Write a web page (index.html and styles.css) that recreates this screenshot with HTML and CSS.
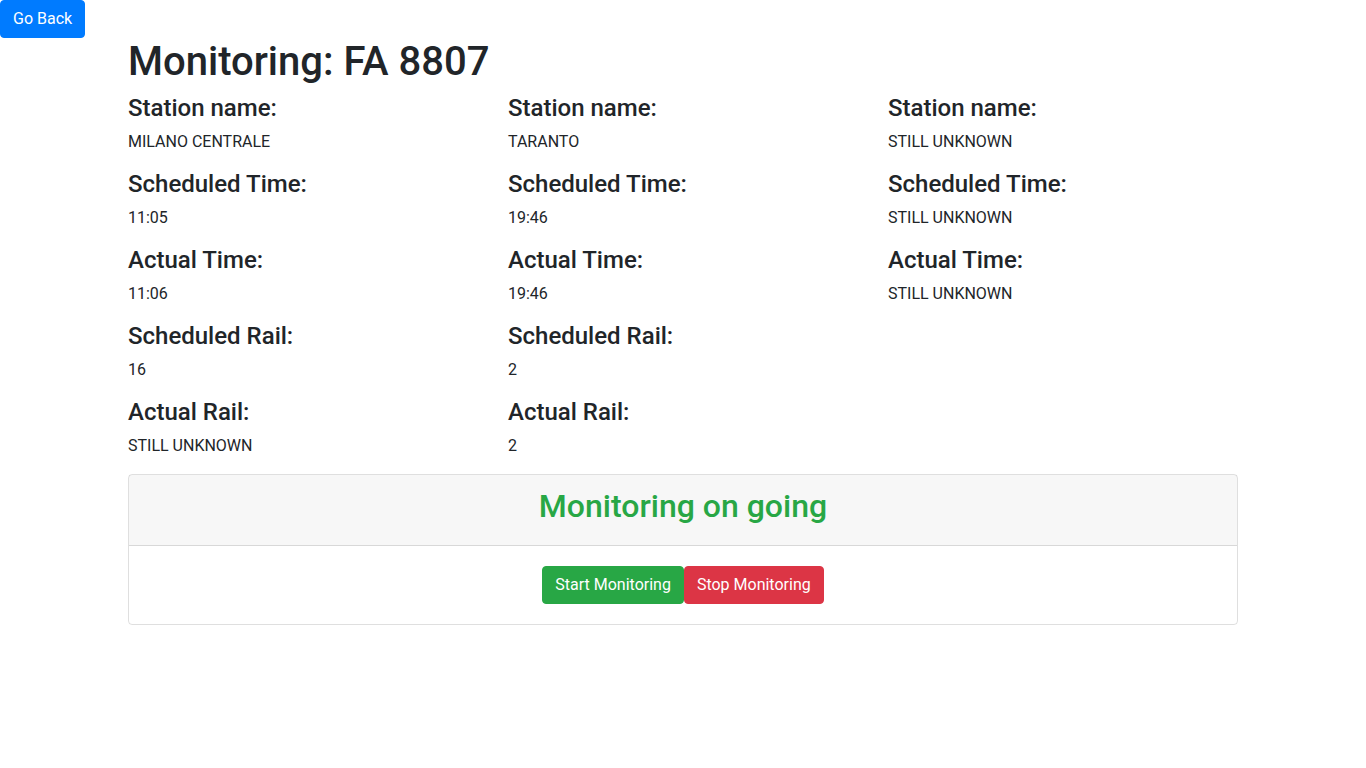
FILE: index.html
```html
<!DOCTYPE html>
<html lang="en">
<head>
<meta charset="utf-8">
<title>Monitoring</title>
<link rel="stylesheet" href="styles.css">
</head>
<body>
<button class="btn btn-primary back">Go Back</button>
<div class="container">
  <h1 class="title">Monitoring: FA 8807</h1>
  <div class="row">
    <div class="col">
      <h4>Station name:</h4><p>MILANO CENTRALE</p>
      <h4>Scheduled Time:</h4><p>11:05</p>
      <h4>Actual Time:</h4><p>11:06</p>
      <h4>Scheduled Rail:</h4><p>16</p>
      <h4>Actual Rail:</h4><p>STILL UNKNOWN</p>
    </div>
    <div class="col">
      <h4>Station name:</h4><p>TARANTO</p>
      <h4>Scheduled Time:</h4><p>19:46</p>
      <h4>Actual Time:</h4><p>19:46</p>
      <h4>Scheduled Rail:</h4><p>2</p>
      <h4>Actual Rail:</h4><p>2</p>
    </div>
    <div class="col">
      <h4>Station name:</h4><p>STILL UNKNOWN</p>
      <h4>Scheduled Time:</h4><p>STILL UNKNOWN</p>
      <h4>Actual Time:</h4><p>STILL UNKNOWN</p>
    </div>
  </div>
  <div class="card">
    <div class="card-header"><h2 class="status">Monitoring on going</h2></div>
    <div class="card-body">
      <div class="actions"><button class="btn btn-success">Start Monitoring</button><button class="btn btn-danger">Stop Monitoring</button></div>
    </div>
  </div>
</div>
</body>
</html>
```

FILE: styles.css
```css
* { box-sizing: border-box; }
body {
  margin: 0;
  font-family: Roboto, "Liberation Sans", sans-serif;
  font-size: 16px;
  line-height: 1.5;
  color: #212529;
  background: #fff;
}
.btn {
  display: inline-block;
  font-family: inherit;
  font-size: 16px;
  line-height: 24px;
  padding: 6px 12px;
  border: 1px solid transparent;
  border-radius: 4px;
  color: #fff;
  cursor: pointer;
  vertical-align: middle;
}
.btn-primary { background: #007bff; border-color: #007bff; }
.btn-success { background: #28a745; border-color: #28a745; }
.btn-danger { background: #dc3545; border-color: #dc3545; }
.back { display: block; }
.container {
  max-width: 1140px;
  margin: 0 auto;
  padding: 0 15px;
}
h1, h2, h4 { margin: 0 0 8px; font-weight: 500; }
.title { font-size: 40px; line-height: 48px; }
h4 { font-size: 24px; line-height: 28px; }
p { margin: 0 0 16px; line-height: 24px; }
.row {
  display: grid;
  grid-template-columns: repeat(3, 1fr);
  margin: 0 -15px;
}
.col { padding: 0 15px; }
.card {
  border: 1px solid rgba(0,0,0,.125);
  border-radius: 4px;
}
.card-header {
  background: rgba(0,0,0,.03);
  border-bottom: 1px solid rgba(0,0,0,.125);
  padding: 12px 20px;
  text-align: center;
}
.status { font-size: 32px; line-height: 38px; color: #28a745; }
.card-body { padding: 20px; }
.actions { display: flex; justify-content: center; }
```
